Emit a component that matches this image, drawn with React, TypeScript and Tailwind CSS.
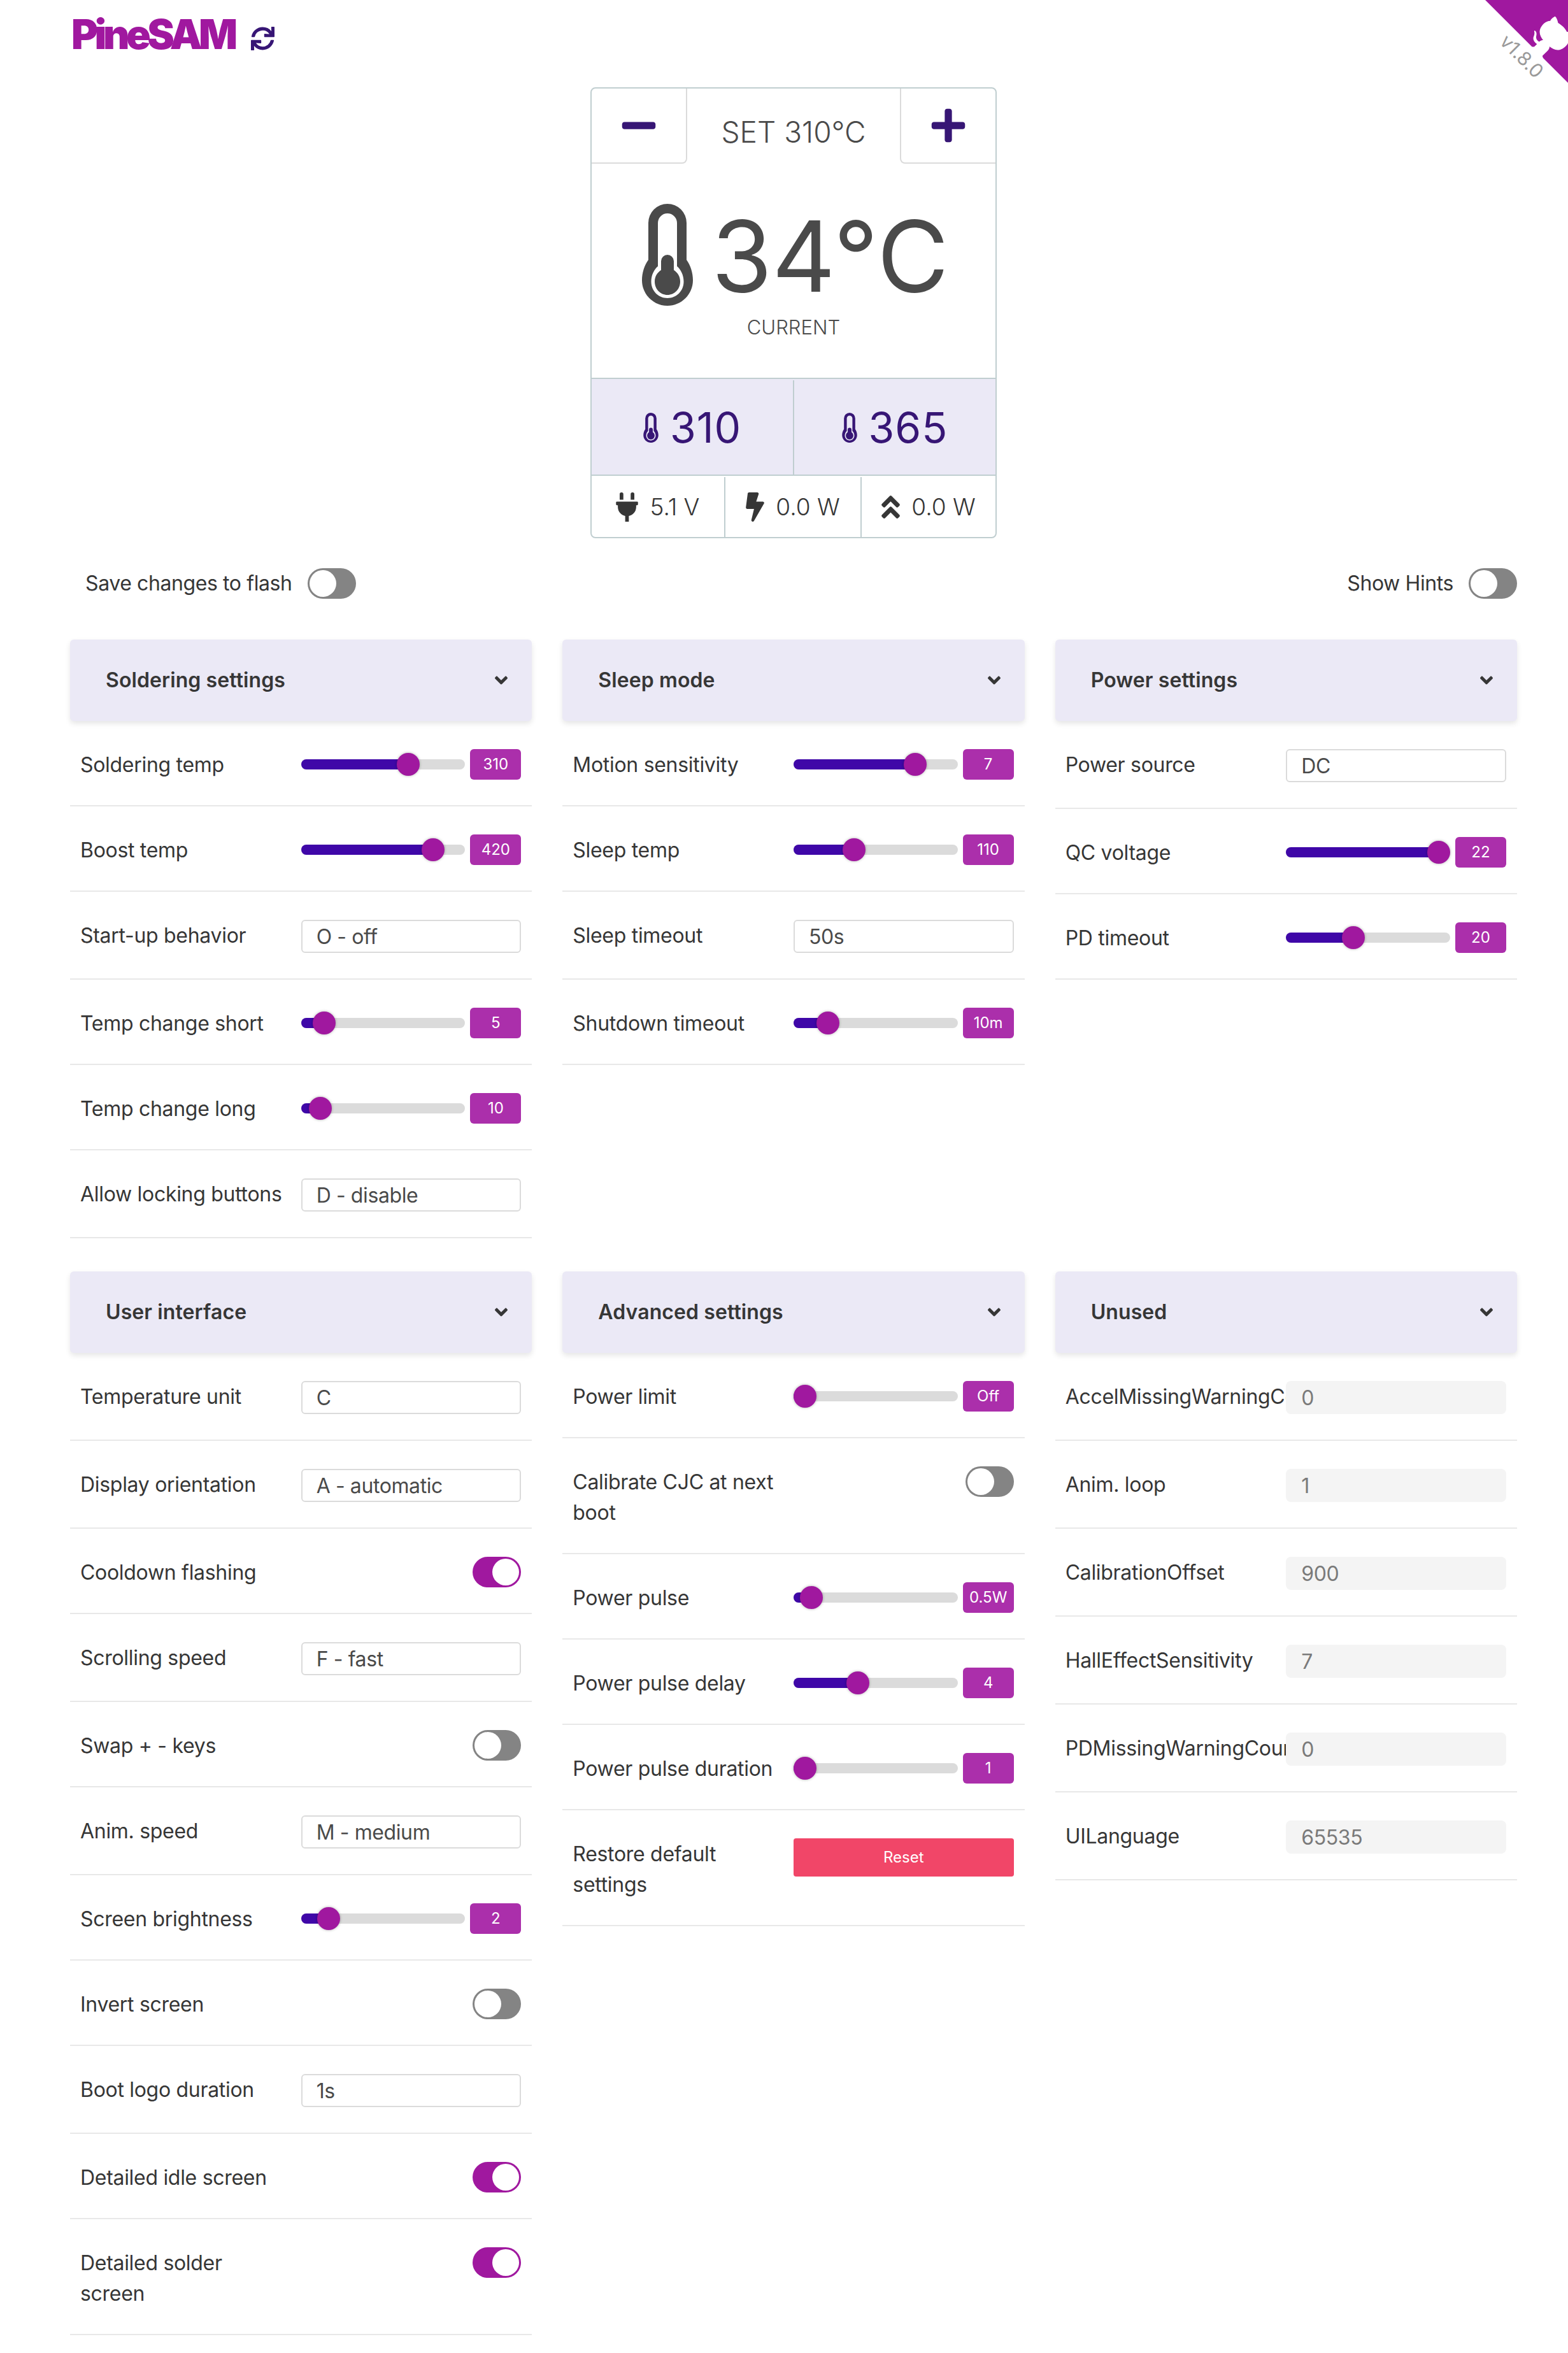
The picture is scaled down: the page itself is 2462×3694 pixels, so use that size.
import React from "react";
import { FaSync, FaMinus, FaPlus, FaPlug, FaBolt, FaAngleDoubleUp, FaAngleDown } from "react-icons/fa";

function Thermo({ className, fill, hole }: { className: string; fill: string; hole: string }) {
  return (
    <svg viewBox="0 0 80 160" className={className}>
      <path
        fill={fill}
        d="M10 30 A30 30 0 0 1 70 30 L70 88 C76 96 80 108 80 120 C80 142 62 160 40 160 C18 160 0 142 0 120 C0 108 4 96 10 88 Z"
      />
      <path
        fill={hole}
        d="M25 30 A15 15 0 0 1 55 30 L55 98 C61 103 65.500 112 65.500 122 C65.500 137 54 148 40 148 C26 148 14.500 137 14.500 122 C14.500 112 19 103 25 98 Z"
      />
      <path
        fill={fill}
        d="M30 90 A10 10 0 0 1 50 90 L50 104 C56 108 60 114 60 122 C60 134 51 143 40 143 C29 143 20 134 20 122 C20 114 24 108 30 104 Z"
      />
    </svg>
  );
}

function Toggle({ on }: { on?: boolean }) {
  return (
    <div
      className={
        on
          ? "flex h-[48px] w-[76px] shrink-0 items-center justify-end rounded-full bg-[#a0189f] px-[3px]"
          : "flex h-[48px] w-[76px] shrink-0 items-center justify-start rounded-full bg-[#848484] px-[3px]"
      }
    >
      <div className="h-[42px] w-[42px] rounded-full bg-white" />
    </div>
  );
}

function Slider({ at, value }: { at: number; value: string }) {
  return (
    <div className="flex h-[48px] items-center gap-[8px]">
      <div className="relative h-[16px] flex-1 rounded-full bg-[#dbdbdb]">
        <div className="h-full rounded-full bg-[#3f07a8]" style={{ width: at }} />
        <div
          className="absolute top-[-10px] h-[36px] w-[36px] -translate-x-1/2 rounded-full bg-[#a0189f] shadow-[0_0_4px_rgba(0,0,0,0.3)]"
          style={{ left: at }}
        />
      </div>
      <div className="flex h-[48px] w-[80px] items-center justify-center rounded-[6px] bg-[#ab2fab] text-[24px] leading-[48px] text-white">
        {value}
      </div>
    </div>
  );
}

function Select({ value }: { value: string }) {
  return (
    <div className="relative flex h-[52px] items-center rounded-[6px] border-2 border-[#dbdbdb] bg-white pt-[2px] pl-[22px] text-[32px] tracking-[-0.4px] text-[#4a4a4a]">
      {value}
    </div>
  );
}

function Disabled({ value }: { value: string }) {
  return (
    <div className="relative flex h-[52px] items-center rounded-[8px] bg-[#f4f4f4] pt-[2px] pl-[24px] text-[32px] tracking-[-0.4px] text-[#7a7a7a]">
      {value}
    </div>
  );
}

function Row({ label, children }: { label: string; children: React.ReactNode }) {
  return (
    <div className="grid grid-cols-2 border-b-2 border-[#e8e8e8] pt-[44px] pr-[17px] pb-[40px] pl-[17px]">
      <div className="-mb-[1px] -ml-[1px] pt-[1px] pr-[24px] text-[32px] leading-[48px] tracking-[-0.3px] text-[#363636]">
        {label}
      </div>
      <div>{children}</div>
    </div>
  );
}

function Panel({ title, children }: { title: string; children: React.ReactNode }) {
  return (
    <div>
      <div className="flex h-[128px] items-center justify-between rounded-[6px] bg-[#ebe9f6] pr-[38px] pl-[56px] shadow-[0_4px_8px_rgba(10,10,10,0.1)]">
        <span className="text-[32px] font-semibold tracking-[0.1px] text-[#363636]">{title}</span>
        <FaAngleDown className="h-[32px] w-[20px] text-[#363636]" />
      </div>
      {children}
    </div>
  );
}

export default function App() {
  return (
    <div className="relative min-h-[3694px] w-full overflow-hidden bg-white pr-[80px] pl-[110px] [font-family:Inter,sans-serif]">
      <svg viewBox="0 0 250 250" className="absolute top-0 right-[-30px] h-[160px] w-[160px]">
        <path fill="#a0189f" d="M0,0 L115,115 L130,115 L142,142 L250,250 L250,0 Z" />
        <path
          fill="#fff"
          d="M128.3,109.0 C113.8,99.7 119.0,89.6 119.0,89.6 C122.0,82.7 120.5,78.6 120.5,78.6 C119.2,72.0 123.4,76.3 123.4,76.3 C127.3,80.9 125.5,87.3 125.5,87.3 C122.9,97.6 130.6,101.9 134.4,103.2"
        />
        <path
          fill="#fff"
          d="M115.0,115.0 C114.9,115.1 118.7,116.5 119.8,115.4 L133.7,101.6 C136.9,99.2 139.9,98.4 142.2,98.6 C133.8,88.0 127.5,74.4 143.8,58.0 C148.5,53.4 154.0,51.2 159.7,51.0 C160.3,49.4 163.2,43.6 171.4,40.1 C171.4,40.1 176.1,42.5 178.8,56.2 C183.1,58.6 187.2,61.8 190.9,65.4 C194.5,69.0 197.7,73.2 200.1,77.6 C213.8,80.2 216.3,84.9 216.3,84.9 C212.7,93.1 206.9,96.0 205.4,96.6 C205.1,102.4 203.0,107.8 198.3,112.5 C181.9,128.9 168.3,122.5 157.7,114.1 C157.9,116.9 156.7,120.9 152.7,124.9 L141.0,136.5 C139.8,137.7 141.6,141.9 141.8,141.8 Z"
        />
      </svg>
      <div className="absolute top-[70px] right-[31px] rotate-45 text-[30px] leading-[36px] text-[#999999]">v1.8.0</div>

      <header className="flex h-[137px] items-start pt-[14px] pl-[2px]">
        <span className="text-[64px] leading-[80px] font-black tracking-[-5.5px] text-[#a0189f]">PineSAM</span>
        <FaSync className="mt-[28px] ml-[26px] h-[37px] w-[37px] text-[#371675]" />
      </header>

      <div className="mx-auto w-[638px] rounded-[8px] border-2 border-[#c0ced0] text-[#4a4a4a]">
        <div className="flex h-[118px] items-stretch">
          <div className="flex w-[150px] items-center justify-center rounded-br-[8px] border-r-2 border-b-2 border-[#dbdbdb]">
            <FaMinus className="h-[60px] w-[60px] text-[#371675]" />
          </div>
          <div className="flex flex-1 items-center justify-center pt-[18px] text-[46px] font-light">SET 310°C</div>
          <div className="flex w-[150px] items-center justify-center rounded-bl-[8px] border-b-2 border-l-2 border-[#dbdbdb]">
            <FaPlus className="h-[60px] w-[60px] text-[#371675]" />
          </div>
        </div>
        <div className="flex h-[338px] flex-col items-center border-b-2 border-[#c0ced0] pt-[63px]">
          <div className="flex h-[160px] items-center gap-[29px] pl-[6px]">
            <Thermo className="h-[160px] w-[80px]" fill="#4a4a4a" hole="#ffffff" />
            <span className="mt-[4px] text-[154px] leading-[160px]">34°C</span>
          </div>
          <div className="mt-[10px] text-[31px] leading-[48px] font-light">CURRENT</div>
        </div>
        <div className="flex h-[152px] border-b-2 border-[#c0ced0] bg-[#ebe9f6] pt-[2px] text-[66px] tracking-[1px] text-[#371675]">
          <div className="flex flex-1 items-center justify-center gap-[18px] border-r-2 border-[#c0ced0]">
            <Thermo className="h-[47px] w-[24px]" fill="#371675" hole="#ebe9f6" />
            <span>310</span>
          </div>
          <div className="flex flex-1 items-center justify-center gap-[18px]">
            <Thermo className="h-[47px] w-[24px]" fill="#371675" hole="#ebe9f6" />
            <span>365</span>
          </div>
        </div>
        <div className="flex h-[96px] pt-[2px] text-[37px] font-light text-[#363636]">
          <div className="flex w-[210px] items-center justify-center gap-[18px] border-r-2 border-[#c0ced0]">
            <FaPlug className="h-[46px] w-[35px]" />
            <span>5.1 V</span>
          </div>
          <div className="flex w-[214px] items-center justify-center gap-[18px] border-r-2 border-[#c0ced0]">
            <FaBolt className="h-[46px] w-[29px]" />
            <span>0.0 W</span>
          </div>
          <div className="flex flex-1 items-center justify-center gap-[18px]">
            <FaAngleDoubleUp className="h-[46px] w-[29px]" />
            <span>0.0 W</span>
          </div>
        </div>
      </div>

      <div className="mt-[47px] flex h-[48px] items-center justify-between text-[32px] tracking-[-0.4px] text-[#363636]">
        <div className="flex items-center gap-[24px] pl-[24px]">
          <span>Save changes to flash</span>
          <Toggle />
        </div>
        <div className="flex items-center gap-[24px]">
          <span>Show Hints</span>
          <Toggle />
        </div>
      </div>

      <div className="mt-[64px] grid grid-cols-3 gap-x-[48px]">
        <Panel title="Soldering settings">
          <Row label="Soldering temp"><Slider at={168} value="310" /></Row>
          <Row label="Boost temp"><Slider at={207} value="420" /></Row>
          <Row label="Start-up behavior"><Select value="O - off" /></Row>
          <Row label="Temp change short"><Slider at={36} value="5" /></Row>
          <Row label="Temp change long"><Slider at={30} value="10" /></Row>
          <Row label="Allow locking buttons"><Select value="D - disable" /></Row>
        </Panel>
        <Panel title="Sleep mode">
          <Row label="Motion sensitivity"><Slider at={191} value="7" /></Row>
          <Row label="Sleep temp"><Slider at={95} value="110" /></Row>
          <Row label="Sleep timeout"><Select value="50s" /></Row>
          <Row label="Shutdown timeout"><Slider at={54} value="10m" /></Row>
        </Panel>
        <Panel title="Power settings">
          <Row label="Power source"><Select value="DC" /></Row>
          <Row label="QC voltage"><Slider at={240} value="22" /></Row>
          <Row label="PD timeout"><Slider at={106} value="20" /></Row>
        </Panel>
      </div>

      <div className="mt-[52px] grid grid-cols-3 gap-x-[48px]">
        <Panel title="User interface">
          <Row label="Temperature unit"><Select value="C" /></Row>
          <Row label="Display orientation"><Select value="A - automatic" /></Row>
          <Row label="Cooldown flashing"><div className="flex justify-end"><Toggle on /></div></Row>
          <Row label="Scrolling speed"><Select value="F - fast" /></Row>
          <Row label="Swap + - keys"><div className="flex justify-end"><Toggle /></div></Row>
          <Row label="Anim. speed"><Select value="M - medium" /></Row>
          <Row label="Screen brightness"><Slider at={43} value="2" /></Row>
          <Row label="Invert screen"><div className="flex justify-end"><Toggle /></div></Row>
          <Row label="Boot logo duration"><Select value="1s" /></Row>
          <Row label="Detailed idle screen"><div className="flex justify-end"><Toggle on /></div></Row>
          <Row label="Detailed solder screen"><div className="flex justify-end"><Toggle on /></div></Row>
        </Panel>
        <Panel title="Advanced settings">
          <Row label="Power limit"><Slider at={18} value="Off" /></Row>
          <Row label="Calibrate CJC at next boot"><div className="flex justify-end"><Toggle /></div></Row>
          <Row label="Power pulse"><Slider at={28} value="0.5W" /></Row>
          <Row label="Power pulse delay"><Slider at={101} value="4" /></Row>
          <Row label="Power pulse duration"><Slider at={18} value="1" /></Row>
          <Row label="Restore default settings">
            <button className="flex h-[60px] w-full items-center justify-center rounded-[4px] bg-[#f14668] text-[24px] text-white">
              Reset
            </button>
          </Row>
        </Panel>
        <Panel title="Unused">
          <Row label="AccelMissingWarningCounter"><Disabled value="0" /></Row>
          <Row label="Anim. loop"><Disabled value="1" /></Row>
          <Row label="CalibrationOffset"><Disabled value="900" /></Row>
          <Row label="HallEffectSensitivity"><Disabled value="7" /></Row>
          <Row label="PDMissingWarningCounter"><Disabled value="0" /></Row>
          <Row label="UILanguage"><Disabled value="65535" /></Row>
        </Panel>
      </div>
    </div>
  );
}
